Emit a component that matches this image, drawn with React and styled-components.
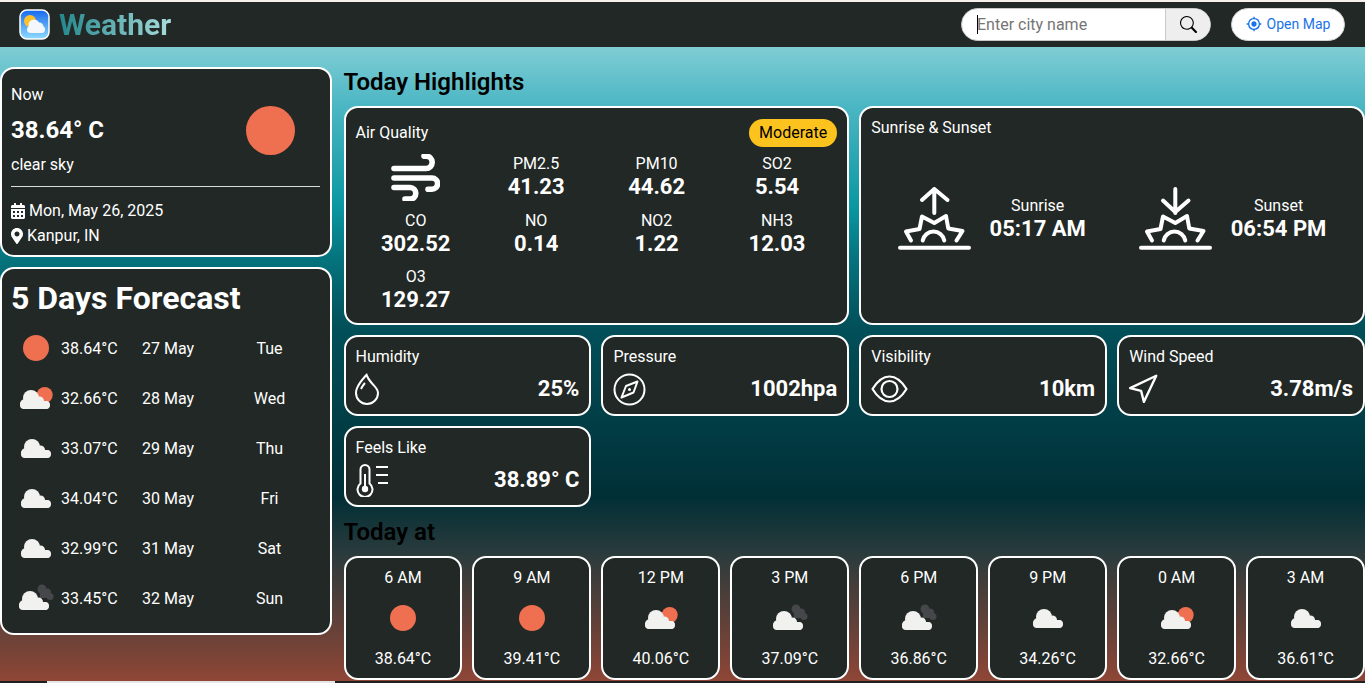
import React from 'react'
import styled, { createGlobalStyle } from 'styled-components'
import { BsSearch, BsDroplet } from 'react-icons/bs'
import { FaCalendarAlt, FaMapMarkerAlt } from 'react-icons/fa'
import { MdGpsFixed } from 'react-icons/md'
import { Navigation } from 'lucide-react'

const GlobalStyle = createGlobalStyle`
  html, body {
    margin: 0;
    padding: 0;
    height: 100%;
    overflow: hidden;
    background: #f7efe9;
    font-family: Roboto, "Liberation Sans", sans-serif;
    color: #fff;
  }
  * { box-sizing: border-box; }
`

const Page = styled.div`
  height: 683px;
  padding-top: 2px;
  display: flex;
  flex-direction: column;
  overflow: hidden;
`

const Header = styled.header`
  height: 45px;
  flex: none;
  background: #222825;
  display: flex;
  align-items: center;
  justify-content: space-between;
  padding: 0 20px 0 19px;
`

const Brand = styled.div`
  display: flex;
  align-items: center;
  gap: 9px;
`

const Logo = styled.svg`
  width: 31px;
  height: 31px;
  display: block;
`

const BrandName = styled.span`
  font-size: 30px;
  font-weight: 700;
  line-height: 1;
  background: linear-gradient(90deg, #23878d 0%, #a8dcdc 100%);
  -webkit-background-clip: text;
  background-clip: text;
  color: transparent;
`

const Tools = styled.div`
  display: flex;
  align-items: center;
  gap: 20px;
  margin-top: -1px;
`

const SearchBox = styled.div`
  width: 250px;
  height: 33px;
  display: flex;
  border-radius: 17px;
  border: 1px solid #c9c9c9;
  overflow: hidden;
  background: #fff;
`

const SearchField = styled.div`
  flex: 1;
  display: flex;
  align-items: center;
  padding-left: 15px;
`

const Caret = styled.span`
  width: 1px;
  height: 19px;
  background: #000;
  flex: none;
`

const SearchInput = styled.input`
  flex: 1;
  width: 100%;
  border: none;
  outline: none;
  padding: 0;
  margin-left: -1px;
  background: transparent;
  font-family: Roboto, sans-serif;
  font-size: 16px;
  &::placeholder { color: #757575; opacity: 1; }
`

const SearchButton = styled.button`
  width: 45px;
  border: none;
  border-left: 1px solid #c9c9c9;
  background: #eeeeee;
  color: #000;
  display: flex;
  align-items: center;
  justify-content: center;
  padding: 0;
  font-size: 17px;
`

const MapButton = styled.button`
  width: 114px;
  height: 33px;
  border: 1px solid #d5d5d5;
  border-radius: 17px;
  background: #fff;
  color: #1a73e8;
  display: flex;
  align-items: center;
  justify-content: center;
  gap: 5px;
  font-family: Roboto, sans-serif;
  font-size: 14px;
  padding: 0;
`

const Body = styled.main`
  flex: 1;
  min-height: 0;
  display: grid;
  grid-template-columns: 331.5px 1fr;
  column-gap: 12px;
  padding-top: 20px;
  background: linear-gradient(
    180deg,
    #80cdd4 0%,
    #4fb8c5 8.5%,
    #0b98a1 25%,
    #05757f 33%,
    #02505a 44%,
    #012f36 71%,
    #2b3b3c 80%,
    #8f4636 100%
  );
`

const LeftColumn = styled.div`
  display: flex;
  flex-direction: column;
  gap: 10px;
`

const RightColumn = styled.div`
  min-width: 0;
`

const Card = styled.section`
  background: #222825;
  border: 2px solid #fff;
  border-radius: 14px;
`

const NowCard = styled(Card)`
  height: 190px;
  padding: 16px 10px 0 9px;
`

const Label = styled.div`
  font-size: 16px;
  line-height: 20px;
`

const NowMain = styled.div`
  display: flex;
  align-items: center;
  justify-content: space-between;
  height: 50px;
  padding-right: 25px;
`

const NowTemp = styled.div`
  font-size: 24px;
  font-weight: 700;
`

const NowDivider = styled.hr`
  border: none;
  height: 1px;
  background: #dcdcdc;
  margin: 11px 0 11px;
`

const MetaRow = styled.div`
  display: flex;
  align-items: center;
  gap: 4px;
  height: 25px;
  font-size: 16px;
`

const CalendarIcon = styled(FaCalendarAlt)`
  width: 14px;
  height: 16px;
`

const PinIcon = styled(FaMapMarkerAlt)`
  width: 12px;
  height: 16px;
`

const ForecastCard = styled(Card)`
  height: 368px;
  padding: 12px 0 0 9px;
`

const ForecastTitle = styled.h2`
  margin: 0 0 7px;
  font-size: 32px;
  font-weight: 700;
  line-height: 35px;
`

const ForecastRow = styled.div`
  display: grid;
  grid-template-columns: 43px 81px 1fr 88px;
  height: 50px;
  align-items: center;
  font-size: 16px;
  padding: 0 16px 0 7px;
`

const DayName = styled.span`
  justify-self: center;
`

const SectionTitle = styled.h2`
  margin: 0;
  color: #000;
  font-size: 24px;
  font-weight: 600;
  line-height: 30px;
`

const HighlightGrid = styled.div`
  display: grid;
  grid-template-columns: repeat(4, 1fr);
  gap: 10px;
  margin-top: 9px;
`

const AirCard = styled(Card)`
  grid-column: span 2;
  height: 219px;
  padding: 11px 10px 0;
`

const CardHead = styled.div`
  display: flex;
  align-items: center;
  justify-content: space-between;
  height: 28px;
`

const Badge = styled.span`
  background: #fcc31e;
  color: #000;
  font-size: 16px;
  padding: 0 10px;
  line-height: 28px;
  border-radius: 14px;
`

const AirGrid = styled.div`
  display: grid;
  grid-template-columns: repeat(4, 1fr);
  grid-auto-rows: 56.5px;
  margin-top: 2px;
`

const AirCell = styled.div`
  display: flex;
  flex-direction: column;
  align-items: center;
  justify-content: center;
`

const AirLabel = styled.span`
  font-size: 16px;
  line-height: 20px;
`

const BigValue = styled.span`
  font-size: 22px;
  font-weight: 700;
  line-height: 26px;
`

const SunCard = styled(Card)`
  grid-column: span 2;
  height: 219px;
  padding: 10px 10px 0;
`

const SunGrid = styled.div`
  display: grid;
  grid-template-columns: 1fr 1fr;
  margin-top: 48px;
`

const SunItem = styled.div`
  display: flex;
  align-items: center;
  justify-content: center;
  gap: 19px;
`

const SunText = styled.div`
  display: flex;
  flex-direction: column;
  align-items: center;
  margin-top: 2px;
`

const SmallCard = styled(Card)`
  height: 81px;
  padding: 10px 10px 0;
`

const SmallBody = styled.div`
  display: flex;
  align-items: center;
  justify-content: space-between;
  height: 36px;
  margin-top: 4px;
`

const DropIcon = styled(BsDroplet)`
  margin-left: -5px;
`

const NavIcon = styled(Navigation)`
  margin-left: -3px;
`

const TodayTitle = styled(SectionTitle)`
  margin-top: 10px;
`

const HourGrid = styled.div`
  display: grid;
  grid-template-columns: repeat(8, 1fr);
  gap: 10px;
  margin-top: 9px;
`

const HourCard = styled(Card)`
  height: 124px;
  display: flex;
  flex-direction: column;
  align-items: center;
  justify-content: space-between;
  padding: 10px 0 10px;
  font-size: 16px;
`

const ScrollTrack = styled.div`
  height: 2px;
  flex: none;
  background: #1f1f1f;
`

const ScrollThumb = styled.div`
  width: 288px;
  height: 2px;
  margin-left: 47px;
  background: #e6e6e6;
`

const IconSvg = styled.svg`
  display: block;
  flex: none;
`

const Cloud = ({ x, y }) => (
  <g transform={`translate(${x} ${y})`} fill="#f1f1ef">
    <rect x="0" y="11" width="30" height="8" rx="4" />
    <circle cx="11" cy="8" r="8" />
    <circle cx="19.5" cy="11" r="4.5" />
    <circle cx="25.5" cy="15" r="4" />
    <circle cx="5" cy="14" r="5" />
  </g>
)

const WeatherIcon = ({ kind }) => (
  <IconSvg width="36" height="28" viewBox="0 0 36 28">
    {kind === 'sun' && <circle cx="18" cy="14" r="13" fill="#ef7050" />}
    {kind === 'few' && (
      <>
        <circle cx="26.7" cy="11" r="8" fill="#ef7050" />
        <Cloud x={2} y={6} />
      </>
    )}
    {kind === 'cloud' && <Cloud x={3} y={5} />}
    {kind === 'dark' && (
      <>
        <g fill="#45474a">
          <circle cx="24" cy="5" r="4.5" />
          <circle cx="29" cy="8.5" r="4" />
          <circle cx="32" cy="12.5" r="3.5" />
          <rect x="22" y="6" width="8" height="8" />
        </g>
        <Cloud x={1} y={7} />
      </>
    )}
  </IconSvg>
)

const LogoIcon = () => (
  <Logo viewBox="0 0 31 31">
    <defs>
      <linearGradient id="logoSky" x1="0" y1="0" x2="0" y2="1">
        <stop offset="0" stopColor="#1668ee" />
        <stop offset="1" stopColor="#8fdcff" />
      </linearGradient>
    </defs>
    <rect x="1" y="1" width="29" height="29" rx="7" fill="url(#logoSky)" stroke="#fff" strokeWidth="1.5" />
    <circle cx="11" cy="12" r="6" fill="#fbc02d" />
    <g fill="#f4f8fc">
      <rect x="8" y="17" width="18" height="7" rx="3.5" />
      <circle cx="15" cy="16" r="5.5" />
      <circle cx="20" cy="18" r="4.5" />
    </g>
  </Logo>
)

const WindIcon = () => (
  <IconSvg width="49" height="47" viewBox="0 0 49 47" fill="none" stroke="#fff" strokeWidth="5.6" strokeLinecap="round">
    <path d="M3 14.5H35a6.2 6.2 0 0 0 0-12.4H33" />
    <path d="M3 24H41a5.6 5.6 0 0 1 0 11.2H37" />
    <path d="M3 33.5H19a5.8 5.8 0 0 1 0 11.6H14" />
  </IconSvg>
)

const SunEvent = ({ up }) => (
  <IconSvg width="73" height="64" viewBox="0 0 73 64" fill="none" stroke="#fff" strokeWidth="4" strokeLinecap="round" strokeLinejoin="round">
    {up ? (
      <path d="M36.3 27V3M24 14 36.3 3 49.5 14" />
    ) : (
      <path d="M36.3 3V27M24 14.5 36.3 26 49.5 14.5" />
    )}
    <path d="M13 54.5 8 45.5 21.5 43 24 30.5 36.3 37 48 30 50.3 42.5 64.5 45 58.5 54.5" />
    <path d="M24.7 54.5a11 11 0 0 1 21.6 0" />
    <path d="M2 61.7H71" />
  </IconSvg>
)

const CompassIcon = () => (
  <IconSvg width="33" height="33" viewBox="0 0 33 33" fill="none" stroke="#fff" strokeWidth="2">
    <circle cx="16.5" cy="16.5" r="15" />
    <path d="M24.5 8.5 20.5 19.5 8.5 24.5 13 13Z" strokeLinejoin="round" />
    <circle cx="16.5" cy="16.5" r="1.5" fill="#fff" stroke="none" />
  </IconSvg>
)

const EyeIcon = () => (
  <IconSvg width="37" height="28" viewBox="0 0 37 28" fill="none" stroke="#fff" strokeWidth="2.2">
    <path d="M1.5 14C7 5 12.5 1.5 18.5 1.5S30 5 35.5 14C30 23 24.5 26.5 18.5 26.5S7 23 1.5 14Z" strokeLinejoin="round" />
    <circle cx="18.5" cy="14" r="8" />
  </IconSvg>
)

const ThermoIcon = () => (
  <IconSvg width="34" height="33" viewBox="0 0 34 33" fill="none" stroke="#fff" strokeWidth="2">
    <path d="M4.5 19.5V5.5a4.5 4.5 0 0 1 9 0V19.5a7.5 7.5 0 1 1-9 0Z" />
    <path d="M9 10V24" />
    <circle cx="9" cy="25" r="3.2" fill="#fff" stroke="none" />
    <path d="M20 3H32M20 11H32M22 19H32" />
  </IconSvg>
)

const forecast = [
  ['sun', '38.64°C', '27 May', 'Tue'],
  ['few', '32.66°C', '28 May', 'Wed'],
  ['cloud', '33.07°C', '29 May', 'Thu'],
  ['cloud', '34.04°C', '30 May', 'Fri'],
  ['cloud', '32.99°C', '31 May', 'Sat'],
  ['dark', '33.45°C', '32 May', 'Sun'],
]

const pollutants = [
  ['PM2.5', '41.23'],
  ['PM10', '44.62'],
  ['SO2', '5.54'],
  ['CO', '302.52'],
  ['NO', '0.14'],
  ['NO2', '1.22'],
  ['NH3', '12.03'],
  ['O3', '129.27'],
]

const hours = [
  ['6 AM', 'sun', '38.64°C'],
  ['9 AM', 'sun', '39.41°C'],
  ['12 PM', 'few', '40.06°C'],
  ['3 PM', 'dark', '37.09°C'],
  ['6 PM', 'dark', '36.86°C'],
  ['9 PM', 'cloud', '34.26°C'],
  ['0 AM', 'few', '32.66°C'],
  ['3 AM', 'cloud', '36.61°C'],
]

const stats = [
  ['Humidity', <DropIcon key="d" size={32} />, '25%'],
  ['Pressure', <CompassIcon key="c" />, '1002hpa'],
  ['Visibility', <EyeIcon key="e" />, '10km'],
  ['Wind Speed', <NavIcon key="n" size={33} strokeWidth={1.7} />, '3.78m/s'],
  ['Feels Like', <ThermoIcon key="t" />, '38.89° C'],
]

const App = () => {
  return (
    <Page>
      <GlobalStyle />
      <Header>
        <Brand>
          <LogoIcon />
          <BrandName>Weather</BrandName>
        </Brand>
        <Tools>
          <SearchBox>
            <SearchField>
              <Caret />
              <SearchInput placeholder="Enter city name" />
            </SearchField>
            <SearchButton><BsSearch /></SearchButton>
          </SearchBox>
          <MapButton><MdGpsFixed size={16} />Open Map</MapButton>
        </Tools>
      </Header>

      <Body>
        <LeftColumn>
          <NowCard>
            <Label>Now</Label>
            <NowMain>
              <NowTemp>38.64° C</NowTemp>
              <IconSvg width="49" height="49" viewBox="0 0 49 49">
                <circle cx="24.5" cy="24.5" r="24.5" fill="#ef7050" />
              </IconSvg>
            </NowMain>
            <Label>clear sky</Label>
            <NowDivider />
            <MetaRow><CalendarIcon />Mon, May 26, 2025</MetaRow>
            <MetaRow><PinIcon />Kanpur, IN</MetaRow>
          </NowCard>

          <ForecastCard>
            <ForecastTitle>5 Days Forecast</ForecastTitle>
            {forecast.map(([kind, temp, date, day]) => (
              <ForecastRow key={date}>
                <WeatherIcon kind={kind} />
                <span>{temp}</span>
                <span>{date}</span>
                <DayName>{day}</DayName>
              </ForecastRow>
            ))}
          </ForecastCard>
        </LeftColumn>

        <RightColumn>
          <SectionTitle>Today Highlights</SectionTitle>
          <HighlightGrid>
            <AirCard>
              <CardHead>
                <Label>Air Quality</Label>
                <Badge>Moderate</Badge>
              </CardHead>
              <AirGrid>
                <AirCell><WindIcon /></AirCell>
                {pollutants.map(([name, value]) => (
                  <AirCell key={name}>
                    <AirLabel>{name}</AirLabel>
                    <BigValue>{value}</BigValue>
                  </AirCell>
                ))}
              </AirGrid>
            </AirCard>

            <SunCard>
              <Label>Sunrise &amp; Sunset</Label>
              <SunGrid>
                <SunItem>
                  <SunEvent up />
                  <SunText>
                    <AirLabel>Sunrise</AirLabel>
                    <BigValue>05:17 AM</BigValue>
                  </SunText>
                </SunItem>
                <SunItem>
                  <SunEvent />
                  <SunText>
                    <AirLabel>Sunset</AirLabel>
                    <BigValue>06:54 PM</BigValue>
                  </SunText>
                </SunItem>
              </SunGrid>
            </SunCard>

            {stats.map(([name, icon, value]) => (
              <SmallCard key={name}>
                <Label>{name}</Label>
                <SmallBody>
                  {icon}
                  <BigValue>{value}</BigValue>
                </SmallBody>
              </SmallCard>
            ))}
          </HighlightGrid>

          <TodayTitle>Today at</TodayTitle>
          <HourGrid>
            {hours.map(([time, kind, temp]) => (
              <HourCard key={time}>
                <span>{time}</span>
                <WeatherIcon kind={kind} />
                <span>{temp}</span>
              </HourCard>
            ))}
          </HourGrid>
        </RightColumn>
      </Body>

      <ScrollTrack><ScrollThumb /></ScrollTrack>
    </Page>
  )
}

export default App
